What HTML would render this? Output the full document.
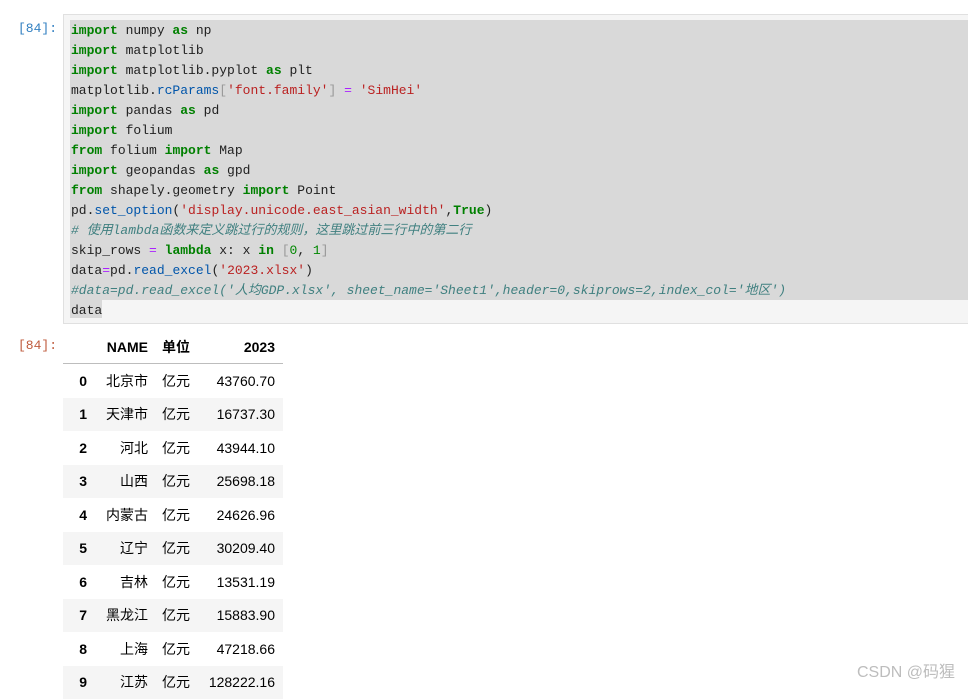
<!DOCTYPE html>
<html><head><meta charset="utf-8"><style>
body{margin:0;width:968px;height:686px;overflow:hidden;background:#fff;position:relative;font-family:"Liberation Sans","Noto Sans CJK SC",sans-serif}
.p{position:absolute;font:13px "Liberation Mono",monospace}
.cell{position:absolute;left:63px;top:14px;width:920px;height:308px;border:1px solid #e0e0e0;background:#f5f5f5}
.hl{position:absolute;left:70px;top:20px;width:900px;height:280px;background:#d9d9d9}
.hl2{position:absolute;left:70px;top:300px;width:32px;height:18px;background:#d9d9d9}
pre{position:absolute;left:71px;top:21px;margin:0;font:13px/20px "Liberation Mono","Noto Sans CJK SC",monospace;color:#212121}
.k{color:#008000;font-weight:bold}.s{color:#ba2121}.o{color:#aa22ff}.c{color:#408080;font-style:italic}.f{color:#0055aa}.b{color:#999}.n{color:#008800}
table{position:absolute;left:63px;top:330px;border-collapse:collapse;font-size:14px;color:#000;width:220px;table-layout:fixed}
th,td{text-align:right;padding:0 6px 0 0;height:33.5px;white-space:nowrap}
td{font-weight:normal}
thead th{height:33px;border-bottom:1px solid #bdbdbd}
tbody tr:nth-child(even){background:#f5f5f5}
th.l,td.l{text-align:left;padding-left:8px}
td.r{padding-right:8px}
.wm{position:absolute;left:857px;top:658px;font-size:16px;color:#bdbdbd}
</style></head><body>
<div class="p" style="left:18px;top:21px;color:#307fc1">[84]:</div>
<div class="cell"></div><div class="hl"></div><div class="hl2"></div>
<pre><span class="k">import</span> numpy <span class="k">as</span> np
<span class="k">import</span> matplotlib
<span class="k">import</span> matplotlib.pyplot <span class="k">as</span> plt
matplotlib.<span class="f">rcParams</span><span class="b">[</span><span class="s">'font.family'</span><span class="b">]</span> <span class="o">=</span> <span class="s">'SimHei'</span>
<span class="k">import</span> pandas <span class="k">as</span> pd
<span class="k">import</span> folium
<span class="k">from</span> folium <span class="k">import</span> Map
<span class="k">import</span> geopandas <span class="k">as</span> gpd
<span class="k">from</span> shapely.geometry <span class="k">import</span> Point
pd.<span class="f">set_option</span>(<span class="s">'display.unicode.east_asian_width'</span>,<span class="k">True</span>)
<span class="c"># 使用lambda函数来定义跳过行的规则，这里跳过前三行中的第二行</span>
skip_rows <span class="o">=</span> <span class="k">lambda</span> x: x <span class="k">in</span> <span class="b">[</span><span class="n">0</span>, <span class="n">1</span><span class="b">]</span>
data<span class="o">=</span>pd.<span class="f">read_excel</span>(<span class="s">'2023.xlsx'</span>)
<span class="c">#data=pd.read_excel('人均GDP.xlsx', sheet_name='Sheet1',header=0,skiprows=2,index_col='地区')</span>
data</pre>
<div class="p" style="left:18px;top:338px;color:#bf5b3d">[84]:</div>
<table><colgroup><col style="width:30px"><col style="width:61px"><col style="width:42px"><col style="width:87px"></colgroup>
<thead><tr><th></th><th>NAME</th><th class="l">单位</th><th class="r" style="padding-right:8px">2023</th></tr></thead>
<tbody>
<tr><th>0</th><td>北京市</td><td class="l">亿元</td><td class="r">43760.70</td></tr>
<tr><th>1</th><td>天津市</td><td class="l">亿元</td><td class="r">16737.30</td></tr>
<tr><th>2</th><td>河北</td><td class="l">亿元</td><td class="r">43944.10</td></tr>
<tr><th>3</th><td>山西</td><td class="l">亿元</td><td class="r">25698.18</td></tr>
<tr><th>4</th><td>内蒙古</td><td class="l">亿元</td><td class="r">24626.96</td></tr>
<tr><th>5</th><td>辽宁</td><td class="l">亿元</td><td class="r">30209.40</td></tr>
<tr><th>6</th><td>吉林</td><td class="l">亿元</td><td class="r">13531.19</td></tr>
<tr><th>7</th><td>黑龙江</td><td class="l">亿元</td><td class="r">15883.90</td></tr>
<tr><th>8</th><td>上海</td><td class="l">亿元</td><td class="r">47218.66</td></tr>
<tr><th>9</th><td>江苏</td><td class="l">亿元</td><td class="r">128222.16</td></tr>
</tbody></table>
<div class="wm">CSDN @码猩</div>
</body></html>
